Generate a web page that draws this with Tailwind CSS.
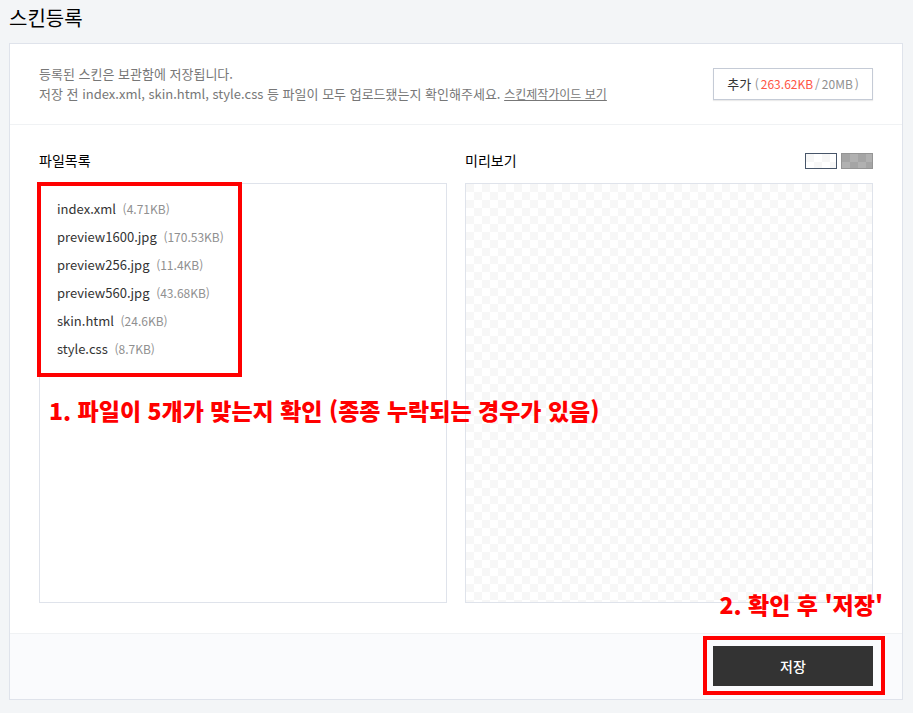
<!DOCTYPE html>
<html lang="ko">
<head>
    <meta charset="UTF-8">
    <meta name="viewport" content="width=device-width, initial-scale=1.0">
    <title>스킨등록</title>
    <script src="https://cdn.jsdelivr.net/npm/@tailwindcss/browser@4"></script>
</head>
<body class="bg-[#f3f5f7] pl-[9px] pr-[10px] pb-[13px] font-['Noto_Sans_CJK_KR',sans-serif] text-[13px] leading-5 text-[#333]">
    <h1 class="pt-1 pb-[11px] text-xl leading-7 text-black">스킨등록</h1>

    <main class="border border-[#dfe3eb] bg-white">
        <div class="flex items-start justify-between border-b border-[#f0f2f4] px-[29px] py-5">
            <p class="text-[#777]">
                등록된 스킨은 보관함에 저장됩니다.<br>
                저장 전 index.xml, skin.html, style.css 등 파일이 모두 업로드됐는지 확인해주세요.
                <a href="#" class="text-xs underline">스킨제작가이드 보기</a>
            </p>
            <button type="button" class="mt-1 h-8 w-40 border border-[#c5cbd6] bg-white text-[13px] shadow-[0_1px_1px_rgba(0,0,0,0.08)]">
                추가
                <span class="text-xs text-[#909090]">(<span class="mx-[2px] text-[#ff5544]">263.62KB</span>/<span class="mx-[2px]">20MB</span>)</span>
            </button>
        </div>

        <div class="grid grid-cols-2 gap-[18px] px-[29px] pt-[25px] pb-[30px]">
            <section>
                <h2 class="mb-[13px] text-sm leading-5 text-black">파일목록</h2>
                <div class="relative h-[420px] border border-[#dfe3eb] px-[17px] pt-[11px]">
                    <ul class="leading-7">
                        <li>index.xml <span class="ml-[3px] text-xs leading-7 text-[#909090]">(4.71KB)</span></li>
                        <li>preview1600.jpg <span class="ml-[3px] text-xs leading-7 text-[#909090]">(170.53KB)</span></li>
                        <li>preview256.jpg <span class="ml-[3px] text-xs leading-7 text-[#909090]">(11.4KB)</span></li>
                        <li>preview560.jpg <span class="ml-[3px] text-xs leading-7 text-[#909090]">(43.68KB)</span></li>
                        <li>skin.html <span class="ml-[3px] text-xs leading-7 text-[#909090]">(24.6KB)</span></li>
                        <li>style.css <span class="ml-[3px] text-xs leading-7 text-[#909090]">(8.7KB)</span></li>
                    </ul>
                    <div class="absolute -top-[2px] -left-[3px] h-[195px] w-[205px] border-4 border-[#f00]"></div>
                    <p class="absolute top-[210px] left-[9px] z-10 text-[23px] leading-8 font-black whitespace-nowrap text-[#f00]">1. 파일이 5개가 맞는지 확인 (종종 누락되는 경우가 있음)</p>
                </div>
            </section>

            <section>
                <div class="mb-[13px] flex items-center justify-between">
                    <h2 class="text-sm leading-5 text-black">미리보기</h2>
                    <div class="flex gap-1 pt-[2px]">
                        <button type="button" aria-label="밝은 배경" class="h-4 w-8 border border-[#475569] bg-[repeating-conic-gradient(#fff_0_25%,#f7f7f7_0_50%)] bg-[length:16px_16px]"></button>
                        <button type="button" aria-label="어두운 배경" class="h-4 w-8 border border-[#959595] bg-[repeating-conic-gradient(#b1b1b1_0_25%,#a5a5a5_0_50%)] bg-[length:16px_16px]"></button>
                    </div>
                </div>
                <div class="relative h-[420px] border border-[#dfe3eb] bg-[repeating-conic-gradient(#fff_0_25%,#f7f7f7_0_50%)] bg-[length:16px_16px]">
                    <p class="absolute -right-[11px] -bottom-[18px] text-[23px] leading-8 font-black whitespace-nowrap text-[#f00]">2. 확인 후 '저장'</p>
                </div>
            </section>
        </div>

        <div class="flex justify-end border-t border-[#f0f2f4] bg-[#fafbfd] px-[29px] pt-3 pb-[13px]">
            <div class="relative">
                <button type="button" class="block h-10 w-40 bg-[#333] text-sm font-medium text-white">저장</button>
                <div class="pointer-events-none absolute -top-[10px] -right-3 -bottom-[9px] -left-[10px] border-4 border-[#f00]"></div>
            </div>
        </div>
    </main>
</body>
</html>
